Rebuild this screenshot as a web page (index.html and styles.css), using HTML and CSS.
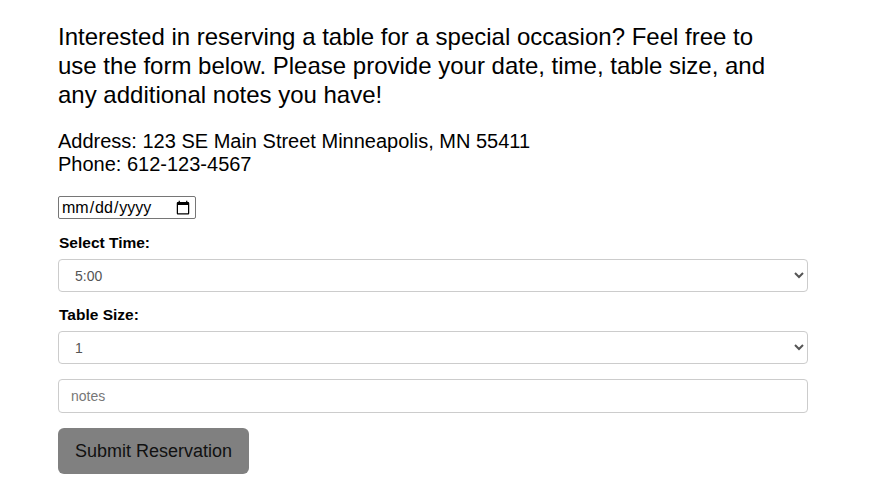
FILE: index.html
```html
<!DOCTYPE html>
<html>
<head>
<meta charset="utf-8">
<link rel="stylesheet" href="styles.css">
</head>
<body>
<main class="page">
  <p class="intro">Interested in reserving a table for a special occasion? Feel free to use the form below. Please provide your date, time, table size, and any additional notes you have!</p>
  <p class="contact">Address: 123 SE Main Street Minneapolis, MN 55411<br>Phone: 612-123-4567</p>
  <form class="form">
    <input class="date" type="date">
    <label class="label" for="time">Select Time:</label>
    <select id="time" class="control before-label">
      <option>5:00</option>
    </select>
    <label class="label" for="size">Table Size:</label>
    <select id="size" class="control">
      <option>1</option>
    </select>
    <input class="control notes" type="text" placeholder="notes">
    <button class="submit" type="button">Submit Reservation</button>
  </form>
</main>
</body>
</html>
```
FILE: styles.css
```css
html, body {
  margin: 0;
  background: #fff;
}
.page {
  width: 750px;
  padding: 22px 0 0 58px;
  font-family: "Liberation Sans", Arial, sans-serif;
  color: #000;
}
.intro {
  max-width: 737px;
  margin: 0 0 21px;
  font-size: 24px;
  line-height: 29px;
}
.contact {
  margin: 0 0 21px;
  font-size: 20px;
  line-height: 22.5px;
}
.form {
  display: flex;
  flex-direction: column;
  align-items: flex-start;
}
.date {
  font-family: "Liberation Sans", Arial, sans-serif;
  font-size: 16px;
  width: 138px;
  height: 23px;
  box-sizing: border-box;
  border: 1px solid #767676;
  border-radius: 2px;
  padding: 0 2px;
  margin: 0 0 14px;
}
.label {
  font-size: 15.5px;
  font-weight: bold;
  line-height: 20px;
  margin: 0 0 6px 1px;
}
.control {
  width: 750px;
  height: 33px;
  box-sizing: border-box;
  border: 1px solid #ccc;
  border-radius: 4px;
  background: #fff;
  color: #555;
  font-family: "Liberation Sans", Arial, sans-serif;
  font-size: 14px;
  padding: 0 8px 0 12px;
  margin: 0 0 15px;
}
.before-label {
  margin-bottom: 13px;
}
.notes {
  height: 34px;
  padding-left: 12px;
}
.notes::placeholder {
  color: #777;
}
.submit {
  height: 46px;
  padding: 0 17px;
  border: none;
  border-radius: 6px;
  background: #808080;
  color: #111;
  font-family: "Liberation Sans", Arial, sans-serif;
  font-size: 18px;
}
```
